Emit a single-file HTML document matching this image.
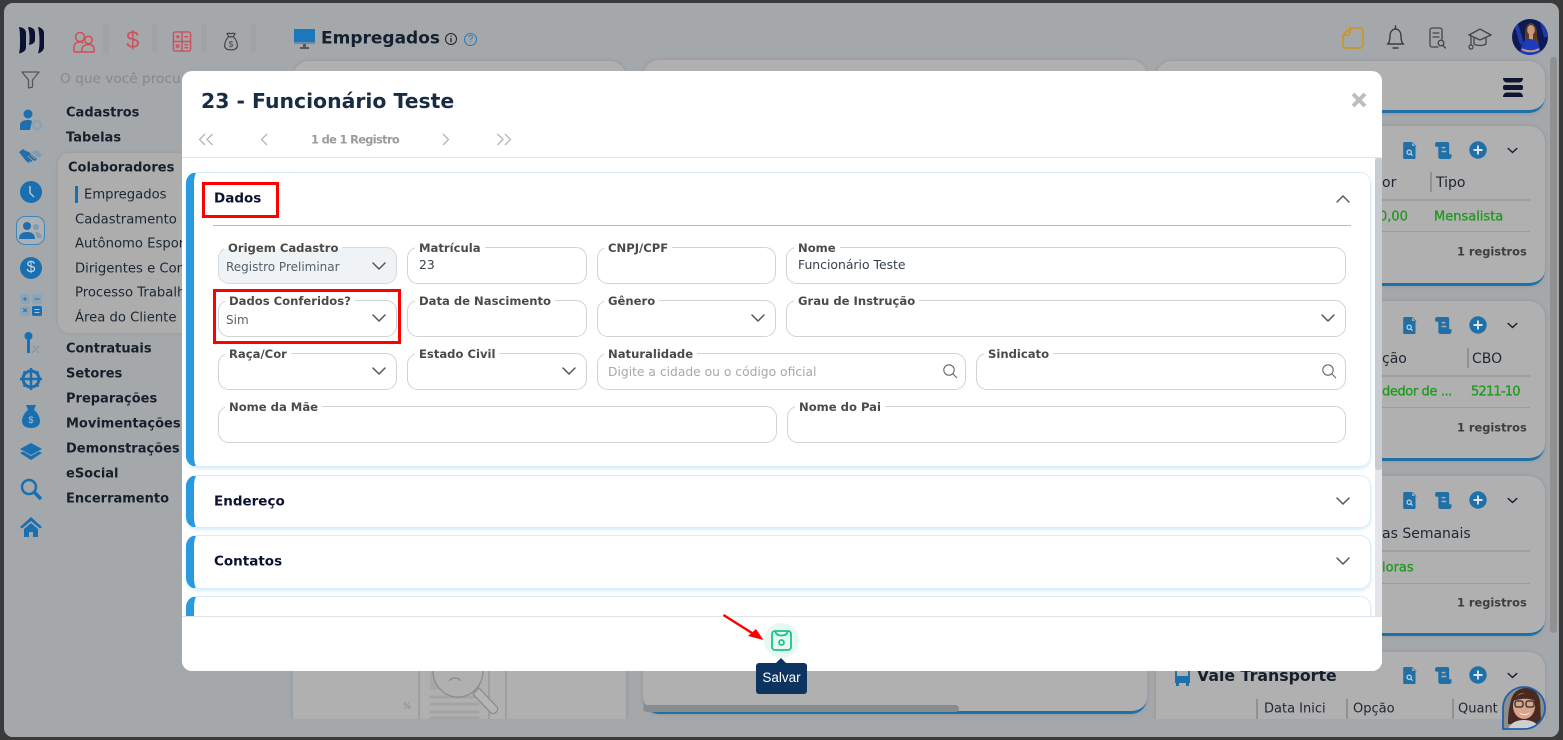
<!DOCTYPE html>
<html lang="pt-BR"><head><meta charset="utf-8"><title>Empregados</title>
<style>
html,body{margin:0;padding:0;width:1563px;height:740px;overflow:hidden;background:#3a3a3a}
*{box-sizing:border-box}
body{font-family:"DejaVu Sans","Liberation Sans",sans-serif;position:relative}
.a{position:absolute}
.t{position:absolute;white-space:nowrap;line-height:1;transform:translateY(-50%)}
#page{position:absolute;left:4px;top:3px;width:1555px;height:734px;background:#a5a8ab;border-radius:9px;overflow:hidden}
.card{position:absolute;background:#b0b0b0;border-radius:16px;box-shadow:0 0 5px rgba(0,0,0,.12)}
.blue{border-bottom:3px solid #2070a8}
.m{font-size:13px;font-weight:700;color:#161f2b}
.s{font-size:13.2px;color:#1d2733}
.h{font-size:14px;color:#1d2733}
.g{font-size:13px;font-weight:400;color:#1f9a1f;-webkit-text-stroke:.3px #1f9a1f}
.r{font-size:11.400px;font-weight:700;color:#3e3e3e}
.sep{position:absolute;background:#a0a3a6}
.ln{position:absolute;height:1px;background:#9c9c9c}
#modal{position:absolute;left:182px;top:71px;width:1200px;height:600px;background:#fff;border-radius:10px;overflow:hidden}
.acc{position:absolute;left:4px;width:1185px;background:#fff;border:1px solid #d9edf9;border-left:8px solid #2a9ade;border-radius:11px;box-shadow:0 2px 3px rgba(42,154,222,.18)}
.acct{position:absolute;left:32px;font-size:13.500px;font-weight:700;color:#0b1230;white-space:nowrap;line-height:1;transform:translateY(-50%)}
.f{position:absolute;height:37px;border:1px solid #ced4da;border-radius:11px;background:#fff}
.f b{position:absolute;left:6px;top:-7px;height:15px;padding:0 4px;background:#fff;font-size:11.6px;line-height:15px;font-weight:700;color:#4a4a4a;white-space:nowrap}
.f span{position:absolute;left:7px;top:19px;font-size:12px;line-height:1;color:#37424e;white-space:nowrap;transform:translateY(-50%)}
.f svg{position:absolute;right:9px;top:11px}
.red{position:absolute;border:3px solid #f00}
</style></head><body>
<svg width="0" height="0" style="position:absolute">
<symbol id="chev" viewBox="0 0 16 10"><path d="M2 2l6 6 6-6" fill="none" stroke="#555" stroke-width="1.5" stroke-linecap="round" stroke-linejoin="round"/></symbol>
<symbol id="mag" viewBox="0 0 16 16"><circle cx="7" cy="7" r="5.2" fill="none" stroke="#666" stroke-width="1.1"/><path d="M11 11l4 4" stroke="#666" stroke-width="1.1" fill="none"/></symbol>
<symbol id="doc" viewBox="0 0 16 20"><path d="M1.500 0H9l5.500 6v12.500a1.500 1.500 0 0 1-1.500 1.500H1.500A1.500 1.500 0 0 1 0 18.500V1.500A1.500 1.500 0 0 1 1.500 0z" fill="#2070a8"/><path d="M10 0l5 5h-5z" fill="#b0b0b0" stroke="#2070a8" stroke-width=".8"/><circle cx="7" cy="12" r="2.500" fill="none" stroke="#cfe0ec" stroke-width="1.300"/><path d="M9 14l2 2" stroke="#cfe0ec" stroke-width="1.300"/></symbol>
<symbol id="scr" viewBox="0 0 18 18"><path d="M0 2.500C0 1 1 0 2.500 0H13c1.300 0 2 1 2 2v11h2.500v2.500c0 1.400-1 2.500-2.500 2.500H6c-1.500 0-2.500-1-2.500-2.500V5H1.500C.5 5 0 4 0 2.500z" fill="#2070a8"/><path d="M7 6h4M7 10h5" stroke="#b0b0b0" stroke-width="1.600"/></symbol>
<symbol id="plus" viewBox="0 0 18 18"><circle cx="9" cy="9" r="8.700" fill="#2070a8"/><path d="M9 4.500v9M4.500 9h9" stroke="#dce6ee" stroke-width="1.900"/></symbol>
<symbol id="down" viewBox="0 0 14 8"><path d="M1.500 1.500L7 6.500l5.500-5" fill="none" stroke="#101a2c" stroke-width="1.800" stroke-linecap="round"/></symbol>
</svg>

<div id="page">
<!-- logo -->
<svg class="a" style="left:14px;top:23px" width="28" height="29" viewBox="0 0 28 29"><path d="M1 1C5 1.500 8 3 8 7v14c0 4-3 5.500-7 6.500 1-4 1-7 1-12.500S2 5 1 1z" fill="#0b1035"/><path d="M10 1c4 0 7 2 7 6v7c0 3-3 4.500-6 5 .5-3 .5-5 .5-8S11 5 10 1z" fill="#0b1035"/><path d="M20 1c3.500 .5 6 3 6 6v14c0 3-2.500 5.500-6 6.500 1-4 1.500-7 1.500-12.500S21 5 20 1z" fill="#0b1035"/></svg>
<div class="sep" style="left:99px;top:21px;width:6px;height:29px"></div>
<div class="sep" style="left:148px;top:21px;width:6px;height:29px"></div>
<div class="sep" style="left:197px;top:21px;width:6px;height:29px"></div>
<div class="sep" style="left:246px;top:21px;width:6px;height:29px"></div>
<!-- top icons -->
<svg class="a" style="left:69px;top:27px" width="22" height="24" viewBox="0 0 22 24" fill="none" stroke="#cf4f59" stroke-width="1.500"><circle cx="7" cy="7" r="4.500"/><circle cx="15.500" cy="10" r="3.800"/><path d="M1 22v-5c0-3 2-5 6-5 1.500 0 2.500.3 3.500 1M9 22v-3c0-2.500 2.500-4.500 6.500-4.500S21 16.500 21 19v3zM1 22h8"/></svg>
<div class="t" style="left:122px;top:38px;font-size:24px;color:#c95560;font-family:'Liberation Sans',sans-serif">$</div>
<svg class="a" style="left:168px;top:28px" width="20" height="21" viewBox="0 0 20 22" fill="none" stroke="#cf4f59" stroke-width="1.500"><rect x="1" y="1" width="18" height="20" rx="2"/><path d="M10 1v20M1 11h18M3.500 6h4M5.500 4v4M12.500 6h4M3.700 14l3.500 3.500M7.200 14l-3.500 3.500M12.500 14.500h4M12.500 17.500h4"/></svg>
<svg class="a" style="left:219px;top:29px" width="16" height="19" viewBox="0 0 18 24" fill="none" stroke="#444" stroke-width="1.500"><path d="M6 6L4 2c2-1 3 0 5 0s3-1 5 0l-2 4zM6 6C3 9 1 13 1 17c0 4 3 5.500 8 5.500s8-1.500 8-5.500c0-4-2-8-5-11z"/><text x="9" y="19" font-size="10" text-anchor="middle" fill="#444" stroke="none" font-family="Liberation Sans">$</text></svg>
<svg class="a" style="left:17px;top:68px" width="19" height="18" viewBox="0 0 19 18" fill="none" stroke="#555" stroke-width="1.300" stroke-linejoin="round"><path d="M1 1h17l-6.500 8v7l-4 1V9z"/></svg>
<div class="t" style="left:56px;top:77px;font-size:13.700px;color:#85888b">O que você procu</div>

<!-- sidebar icons -->
<svg class="a" style="left:15px;top:105px" width="25" height="24" viewBox="0 0 25 24"><circle cx="9" cy="6" r="4.500" fill="#1f6fae"/><path d="M1 22v-5c0-3 3-5 8-5 2 0 3 .3 4 1l-2 9z" fill="#1f6fae"/><circle cx="18" cy="17" r="4" fill="none" stroke="#88a3b8" stroke-width="2.800"/></svg>
<svg class="a" style="left:15px;top:145px" width="24" height="17" viewBox="0 0 24 17"><path d="M12 4l6-2 5 5-3 3z" fill="#7f9bb1"/><path d="M0 4l4-3 3 2 3 1 8 7-2 2-2-1-1 2-2-1-1 2-3-2z" fill="#1f6fae"/><path d="M9 8l5 5M11 6l5 5" stroke="#a5a8ab" stroke-width=".8"/></svg>
<div class="a" style="left:16px;top:178px;width:22px;height:22px;border-radius:50%;background:#1a6fb0"><svg width="22" height="22"><path d="M10 5v7l4 4" stroke="#b6c5d1" stroke-width="1.500" fill="none"/></svg></div>
<div class="a" style="left:12px;top:213px;width:29px;height:29px;border:1.500px solid #3a86bf;border-radius:9px;background:#adb0b3"></div>
<svg class="a" style="left:15px;top:217px" width="23" height="20" viewBox="0 0 23 20"><circle cx="8" cy="6" r="4" fill="#1f6fae"/><path d="M0 19c0-5 3-7 8-7s8 2 8 7z" fill="#1f6fae"/><circle cx="17" cy="7" r="3" fill="#7f9bb1"/><path d="M16 12c4 0 7 2 7 6h-5c0-2-1-4-2-6z" fill="#7f9bb1"/></svg>
<div class="a" style="left:16px;top:254px;width:22px;height:22px;border-radius:50%;background:#1a6fb0;color:#c8d5df;font:400 16px/22px 'Liberation Sans';text-align:center">$</div>
<svg class="a" style="left:16px;top:291px" width="22" height="22" viewBox="0 0 22 22"><rect width="10" height="10" rx="2" fill="#8ba4b8"/><rect x="12" width="10" height="10" rx="2" fill="#8ba4b8"/><rect y="12" width="10" height="10" rx="2" fill="#8ba4b8"/><rect x="12" y="12" width="10" height="10" rx="2" fill="#1a6fb0"/><path d="M3 5h4M5 3v4M14.500 5h5M3.200 14.500l3.600 3.600M6.800 14.500l-3.600 3.600M14.500 15.500h5M14.500 18.500h5" stroke="#2f6f9f" stroke-width="1"/><path d="M14.500 15.500h5M14.500 18.500h5" stroke="#b6c5d1" stroke-width="1"/></svg>
<svg class="a" style="left:19px;top:328px" width="18" height="24" viewBox="0 0 18 24"><circle cx="5.500" cy="5" r="4" fill="#1a6fb0"/><path d="M4 8h3v14H4z" fill="#1a6fb0"/><path d="M9 22l7-7M10 16h2M14 21h2" stroke="#7f9bb1" stroke-width="1.800"/></svg>
<svg class="a" style="left:16px;top:365px" width="22" height="22" viewBox="0 0 22 22" fill="none" stroke="#1a6fb0" stroke-width="3"><circle cx="11" cy="11" r="8"/><path d="M11 0v22M0 11h22M3.500 3.500l2 2M18.500 3.500l-2 2M3.500 18.500l2-2M18.500 18.500l-2-2" stroke-width="2.500"/></svg>
<svg class="a" style="left:18px;top:402px" width="18" height="23" viewBox="0 0 18 23"><path d="M4 0h10l-2 5c3 2 6 7 6 11 0 5-4 7-9 7s-9-2-9-7c0-4 3-9 6-11z" fill="#1a6fb0"/><text x="9" y="18" font-size="9" text-anchor="middle" fill="#b6c5d1" font-family="Liberation Sans">$</text></svg>
<svg class="a" style="left:16px;top:440px" width="22" height="18" viewBox="0 0 22 18"><path d="M11 0l11 6-11 6L0 6z" fill="#1a6fb0"/><path d="M0 10l3-1.500 8 4.500 8-4.500 3 1.500-11 7z" fill="#1a6fb0"/></svg>
<svg class="a" style="left:16px;top:475px" width="22" height="23" viewBox="0 0 22 23" fill="none" stroke="#1a6fb0"><circle cx="9" cy="9" r="7" stroke-width="2.500"/><path d="M14 14l7 7" stroke-width="3.500"/></svg>
<svg class="a" style="left:16px;top:514px" width="22" height="20" viewBox="0 0 22 20"><path d="M11 0L0 10l2 1.500L11 4l9 7.500 2-1.500z" fill="#1a6fb0"/><path d="M4 12l7-6 7 6v8h-5v-5H9v5H4z" fill="#1a6fb0"/></svg>

<div class="t m" style="left:62px;top:110px">Cadastros</div>
<div class="t m" style="left:62px;top:135px">Tabelas</div>
<div class="a" style="left:54px;top:150px;width:200px;height:180px;background:#adadad;border-radius:11px;box-shadow:0 0 4px rgba(0,0,0,.1)"></div>
<div class="t m" style="left:64px;top:165px">Colaboradores</div>
<div class="a" style="left:71px;top:183px;width:3px;height:17px;background:#1a6fb0"></div>
<div class="t s" style="left:80px;top:192px">Empregados</div>
<div class="t s" style="left:71px;top:217px">Cadastramento</div>
<div class="t s" style="left:71px;top:241px">Autônomo Espor</div>
<div class="t s" style="left:71px;top:266px">Dirigentes e Con</div>
<div class="t s" style="left:71px;top:290px">Processo Trabalh</div>
<div class="t s" style="left:71px;top:315px">Área do Cliente</div>
<div class="t m" style="left:62px;top:346px">Contratuais</div>
<div class="t m" style="left:62px;top:371px">Setores</div>
<div class="t m" style="left:62px;top:396px">Preparações</div>
<div class="t m" style="left:62px;top:421px">Movimentações</div>
<div class="t m" style="left:62px;top:446px">Demonstrações</div>
<div class="t m" style="left:62px;top:471px">eSocial</div>
<div class="t m" style="left:62px;top:496px">Encerramento</div>

<!-- title -->
<svg class="a" style="left:290px;top:26px" width="21" height="21" viewBox="0 0 21 21"><rect width="21" height="13" fill="#1a78bd"/><rect y="13" width="21" height="2" fill="#6d8ba2"/><path d="M9 15h3v3h3v2H6v-2h3z" fill="#4e5a63"/></svg>
<div class="t" style="left:317px;top:36px;font-size:17px;font-weight:700;color:#15202e">Empregados</div>
<svg class="a" style="left:440px;top:29px" width="14" height="14" viewBox="0 0 14 14" fill="none" stroke="#222" stroke-width="1"><circle cx="7" cy="7" r="5.500"/><path d="M7 6v4.200M7 3.600v1.200" stroke-width="1.300"/></svg>
<div class="a" style="left:460px;top:30px;width:13px;height:13px;border:1px solid #2a7ab8;border-radius:50%;color:#2a7ab8;font:10px/11px 'Liberation Sans';text-align:center">?</div>

<!-- top right icons -->
<svg class="a" style="left:1338px;top:23px" width="22" height="23" viewBox="0 0 22 23" fill="none" stroke="#c9962a" stroke-width="1.700" stroke-linejoin="round"><path d="M8 2h10a3 3 0 0 1 3 3v14a3 3 0 0 1-3 3H4a3 3 0 0 1-3-3V9z"/><path d="M1 9h5a2 2 0 0 0 2-2V2"/></svg>
<svg class="a" style="left:1382px;top:22px" width="19" height="25" viewBox="0 0 19 25" fill="none" stroke="#3c3c3c" stroke-width="1.400" stroke-linecap="round"><path d="M9.500 1v3M2 19c1.500-2 2-4 2-8 0-4 2.500-7 5.500-7s5.500 3 5.500 7c0 4 .5 6 2 8zM1.500 19h16M7 23h5"/></svg>
<svg class="a" style="left:1425px;top:24px" width="18" height="22" viewBox="0 0 18 22" fill="none" stroke="#444" stroke-width="1.300" stroke-linecap="round"><path d="M13 12V3a2 2 0 0 0-2-2H3a2 2 0 0 0-2 2v15a2 2 0 0 0 2 2h6M4 6h6M4 10h6"/><circle cx="12" cy="16" r="2.800"/><path d="M14 18.500l2.500 2.500"/></svg>
<svg class="a" style="left:1464px;top:24px" width="24" height="24" viewBox="0 0 24 24" fill="none" stroke="#444" stroke-width="1.300"><path d="M1 8l11-6 11 6-11 5z"/><path d="M6 11v6c3 2 9 2 12 0v-6M3 9v9"/><circle cx="3" cy="20" r="2"/></svg>
<svg class="a" style="left:1508px;top:16px" width="36" height="36" viewBox="0 0 36 36"><defs><clipPath id="c1"><circle cx="18" cy="18" r="18"/></clipPath></defs><g clip-path="url(#c1)"><rect width="36" height="36" fill="#0c1a55"/><path d="M4 5l6 20M30 3l4 15" stroke="#2438a8" stroke-width="4"/><path d="M13 14c0-7 3-10 6-10s6 4 6 10 1 8 2 11H12c1-3 1-7 1-11z" fill="#5b3b24"/><ellipse cx="19" cy="11" rx="3.800" ry="5" fill="#c99a7b"/><rect x="17" y="15" width="4" height="6" fill="#c99a7b"/><path d="M8 36c0-9 4-16 10-16s11 7 11 16z" fill="#1c3bbd"/><path d="M10 30c4 3 12 3 17 0" stroke="#c99a7b" stroke-width="2" fill="none"/></g></svg>

<!-- background cards -->
<div class="card" style="left:289px;top:58px;width:333px;height:700px"></div>
<div class="card" style="left:639px;top:57px;width:504px;height:654px;border-bottom:3px solid #2070a8"></div>
<div class="a" style="left:639px;top:702px;width:316px;height:7px;background:#8a8b8d;border-radius:4px"></div>
<div class="card blue" style="left:1152px;top:58px;width:389px;height:52px"></div>
<div class="card blue" style="left:1152px;top:123px;width:389px;height:160px"></div>
<div class="card blue" style="left:1152px;top:298px;width:389px;height:160px"></div>
<div class="card blue" style="left:1152px;top:473px;width:389px;height:160px"></div>
<div class="card" style="left:1152px;top:649px;width:389px;height:100px"></div>

<!-- illustration left card bottom -->
<svg class="a" style="left:389px;top:668px" width="130" height="48" viewBox="0 0 130 48" fill="none"><path d="M26 0v48M96 0v48M113 0v48" stroke="#8f8f8f" stroke-width="1.200" opacity=".85"/><rect x="37" y="0" width="50" height="19" fill="#a8a8a8"/><path d="M38 26h47M38 33h47M38 41h47M38 47h47" stroke="#a3a3a3" stroke-width="3" stroke-linecap="round"/><path d="M40 0c0 14 11 26 25 26S90 14 90 0" stroke="#8a8a8a" stroke-width="1.200" fill="#b0b0b0"/><path d="M56 10c3-4 9-4 12 0" stroke="#8a8a8a" stroke-width="1.200"/><path d="M80 23l6-6 18 19c2.500 3.500-2.500 8-6 6z" stroke="#8a8a8a" stroke-width="1.200" fill="#b5b5b5"/></svg>
<div class="t" style="left:399px;top:704px;font-size:8.500px;color:#7f9080">%</div>

<div class="a" style="left:0;top:716px;width:1555px;height:20px;background:#a5a8ab"></div>
<div class="a" style="left:1546px;top:54px;width:7px;height:576px;background:#8f9193;border-radius:4px"></div>

<svg class="a" style="left:1499px;top:74px" width="21" height="21" viewBox="0 0 21 21"><path d="M0 1h20c0 3-2 4.500-4 4.500H4C2 5.500 0 4 0 1z" fill="#0f1634"/><rect y="8" width="20" height="5" rx="2" fill="#0f1634"/><path d="M0 20c0-3 2-4.500 4-4.500h12c2 0 4 1.500 4 4.500z" fill="#0f1634"/></svg>

<!-- card 2 -->
<svg class="a" style="left:1399px;top:139px" width="14" height="17"><use href="#doc"/></svg>
<svg class="a" style="left:1431px;top:139px" width="17" height="17"><use href="#scr"/></svg>
<svg class="a" style="left:1465px;top:138px" width="18" height="18"><use href="#plus"/></svg>
<svg class="a" style="left:1503px;top:144px" width="11" height="7"><use href="#down"/></svg>
<div class="t h" style="left:1378px;top:180px">or</div><div class="a" style="left:1426px;top:169px;width:2px;height:20px;background:#909396"></div><div class="t h" style="left:1432px;top:180px">Tipo</div>
<div class="ln" style="left:1378px;top:196px;width:148px;background:#9f9f9f;height:2px"></div>
<div class="t g" style="left:1375px;top:214px">0,00</div><div class="t g" style="left:1430px;top:214px">Mensalista</div>
<div class="ln" style="left:1378px;top:228px;width:148px"></div>
<div class="t r" style="left:1453px;top:249px">1 registros</div>
<!-- card 3 -->
<svg class="a" style="left:1399px;top:314px" width="14" height="17"><use href="#doc"/></svg>
<svg class="a" style="left:1431px;top:314px" width="17" height="17"><use href="#scr"/></svg>
<svg class="a" style="left:1465px;top:313px" width="18" height="18"><use href="#plus"/></svg>
<svg class="a" style="left:1503px;top:319px" width="11" height="7"><use href="#down"/></svg>
<div class="t h" style="left:1378px;top:356px">ção</div><div class="a" style="left:1463px;top:345px;width:2px;height:20px;background:#909396"></div><div class="t h" style="left:1468px;top:356px">CBO</div>
<div class="ln" style="left:1378px;top:372px;width:148px;background:#9f9f9f;height:2px"></div>
<div class="t g" style="left:1378px;top:389px;letter-spacing:-.4px">dedor de ...</div><div class="t g" style="left:1467px;top:389px;letter-spacing:-.8px">5211-10</div>
<div class="ln" style="left:1378px;top:404px;width:148px"></div>
<div class="t r" style="left:1453px;top:425px">1 registros</div>
<!-- card 4 -->
<svg class="a" style="left:1399px;top:489px" width="14" height="17"><use href="#doc"/></svg>
<svg class="a" style="left:1431px;top:489px" width="17" height="17"><use href="#scr"/></svg>
<svg class="a" style="left:1465px;top:488px" width="18" height="18"><use href="#plus"/></svg>
<svg class="a" style="left:1503px;top:494px" width="11" height="7"><use href="#down"/></svg>
<div class="t h" style="left:1378px;top:531px">as Semanais</div>
<div class="ln" style="left:1378px;top:547px;width:148px;background:#9f9f9f;height:2px"></div>
<div class="t g" style="left:1378px;top:565px">loras</div>
<div class="ln" style="left:1378px;top:580px;width:148px"></div>
<div class="t r" style="left:1453px;top:600px">1 registros</div>
<!-- card 5 -->
<svg class="a" style="left:1169px;top:664px" width="19" height="19" viewBox="0 0 19 19"><path d="M2 3c0-2 3-3 7.500-3S17 1 17 3v13H2z" fill="#2070a8"/><rect x="4" y="4" width="11" height="5" fill="#b0b0b0"/><rect x="3" y="15" width="3" height="4" fill="#2070a8"/><rect x="13" y="15" width="3" height="4" fill="#2070a8"/></svg>
<div class="t" style="left:1193px;top:673px;font-size:16px;font-weight:700;color:#161f2b;transform:translateY(-50%) scaleX(.985);transform-origin:left">Vale Transporte</div>
<svg class="a" style="left:1399px;top:664px" width="14" height="17"><use href="#doc"/></svg>
<svg class="a" style="left:1431px;top:664px" width="17" height="17"><use href="#scr"/></svg>
<svg class="a" style="left:1465px;top:663px" width="18" height="18"><use href="#plus"/></svg>
<svg class="a" style="left:1503px;top:669px" width="11" height="7"><use href="#down"/></svg>
<div class="t h" style="left:1260px;top:706px;font-size:13px">Data Inici</div>
<div class="t h" style="left:1349px;top:706px;font-size:13px">Opção</div>
<div class="t h" style="left:1454px;top:706px;font-size:13px">Quant</div>
<div class="a" style="left:1252px;top:696px;width:2px;height:20px;background:#909396"></div>
<div class="a" style="left:1342px;top:696px;width:2px;height:20px;background:#909396"></div>
<div class="a" style="left:1448px;top:696px;width:2px;height:20px;background:#909396"></div>

<!-- assistant avatar -->
<svg class="a" style="left:1498px;top:683px" width="44" height="44" viewBox="0 0 44 44"><defs><clipPath id="c2"><path d="M1 43V22a21 21 0 1 1 21 21z"/></clipPath></defs><g clip-path="url(#c2)"><rect width="44" height="44" fill="#8f8d8a"/><path d="M6 38c0-10 1-16 3-24C11 6 17 2 24 2s13 5 14 13c1 9 0 16 2 24z" fill="#4a2a20"/><ellipse cx="22" cy="20" rx="11" ry="13" fill="#d9a68d"/><path d="M11 15c3-6 9-8 14-8s8 3 8 8c-5-3-14-3-22 0z" fill="#4a2a20"/><rect x="13" y="15" width="8" height="6" rx="2" fill="none" stroke="#2b2b2b" stroke-width="1.300"/><rect x="24" y="15" width="8" height="6" rx="2" fill="none" stroke="#2b2b2b" stroke-width="1.300"/><path d="M17 26c3 3 8 3 11 0-2 4-9 4-11 0z" fill="#fff"/><path d="M6 44c2-7 8-10 16-10s14 3 16 10z" fill="#cfcfd2"/></g><path d="M1 43V22a21 21 0 1 1 21 21z" fill="none" stroke="#1f5fae" stroke-width="1.800"/></svg>
</div>

<!-- MODAL -->
<div id="modal">
<div class="t" style="left:19px;top:30px;font-size:20.400px;font-weight:700;color:#182d42">23 - Funcionário Teste</div>
<svg class="a" style="left:1168px;top:20px" width="18" height="18" viewBox="0 0 18 18"><path d="M3 3l12 12M15 3L3 15" stroke="#bdbdbd" stroke-width="4"/></svg>
<svg class="a" style="left:16px;top:62px" width="16" height="13" viewBox="0 0 16 13" fill="none" stroke="#b5b5b5" stroke-width="1.300"><path d="M7 1L1.500 6.500 7 12M14.500 1L9 6.500l5.500 5.500"/></svg>
<svg class="a" style="left:78px;top:62px" width="9" height="13" viewBox="0 0 9 13" fill="none" stroke="#b5b5b5" stroke-width="1.300"><path d="M7 1L1.500 6.500 7 12"/></svg>
<div class="t" style="left:129px;top:69px;font-size:11.400px;font-weight:700;color:#9b9b9b;letter-spacing:-.65px">1 de 1 Registro</div>
<svg class="a" style="left:259px;top:62px" width="9" height="13" viewBox="0 0 9 13" fill="none" stroke="#b5b5b5" stroke-width="1.300"><path d="M2 1l5.500 5.500L2 12"/></svg>
<svg class="a" style="left:314px;top:62px" width="16" height="13" viewBox="0 0 16 13" fill="none" stroke="#b5b5b5" stroke-width="1.300"><path d="M1.500 1L7 6.500 1.500 12M9 1l5.500 5.500L9 12"/></svg>
<div class="a" style="left:0;top:86px;width:1200px;height:1px;background:#e2e4e7"></div>

<!-- accordions -->
<div class="acc" style="top:101px;height:295px"></div>
<div class="acct" style="top:128px">Dados</div>
<svg class="a" style="left:1153px;top:123px" width="16" height="10"><path d="M2 8l6-6 6 6" fill="none" stroke="#555" stroke-width="1.400" stroke-linecap="round"/></svg>
<div class="a" style="left:31px;top:154px;width:1138px;height:1px;background:#a6bccb"></div>

<div class="f" style="left:36px;top:176px;width:179px;background:#f0f3f5;border-color:#d5dade"><b style="background:linear-gradient(#fff 50%,#f0f3f5 50%);left:5px">Origem Cadastro</b><span style="color:#55606b">Registro Preliminar</span><svg width="16" height="10" style="top:13px"><use href="#chev"/></svg></div>
<div class="f" style="left:225px;top:176px;width:180px"><b style="left:7px">Matrícula</b><span style="top:17px;left:11px;font-size:12.400px">23</span></div>
<div class="f" style="left:415px;top:176px;width:179px"><b>CNPJ/CPF</b></div>
<div class="f" style="left:604px;top:176px;width:560px"><b style="left:7px">Nome</b><span style="top:17px;left:11px;font-size:12.400px">Funcionário Teste</span></div>

<div class="f" style="left:36px;top:229px;width:179px"><b>Dados Conferidos?</b><span style="color:#55606b">Sim</span><svg width="16" height="10" style="top:12px"><use href="#chev"/></svg></div>
<div class="f" style="left:225px;top:229px;width:180px"><b style="left:7px">Data de Nascimento</b></div>
<div class="f" style="left:415px;top:229px;width:179px"><b>Gênero</b><svg width="16" height="10" style="top:12px"><use href="#chev"/></svg></div>
<div class="f" style="left:604px;top:229px;width:560px"><b style="left:7px">Grau de Instrução</b><svg width="16" height="10" style="top:12px"><use href="#chev"/></svg></div>

<div class="f" style="left:36px;top:282px;width:179px"><b>Raça/Cor</b><svg width="16" height="10" style="top:12px"><use href="#chev"/></svg></div>
<div class="f" style="left:225px;top:282px;width:180px"><b style="left:7px">Estado Civil</b><svg width="16" height="10" style="top:12px"><use href="#chev"/></svg></div>
<div class="f" style="left:415px;top:282px;width:369px"><b>Naturalidade</b><span style="color:#a8a8a8;left:10px;font-size:12.300px;top:18px">Digite a cidade ou o código oficial</span><svg width="16" height="16" style="top:9px;right:7px"><use href="#mag"/></svg></div>
<div class="f" style="left:794px;top:282px;width:370px"><b style="left:7px">Sindicato</b><svg width="16" height="16" style="top:9px;right:8px"><use href="#mag"/></svg></div>

<div class="f" style="left:36px;top:335px;width:559px"><b>Nome da Mãe</b></div>
<div class="f" style="left:605px;top:335px;width:559px"><b style="left:7px">Nome do Pai</b></div>

<div class="acc" style="top:404px;height:53px"></div>
<div class="acct" style="top:431px">Endereço</div>
<svg class="a" style="left:1153px;top:425px" width="16" height="10"><use href="#chev"/></svg>
<div class="acc" style="top:464px;height:54px"></div>
<div class="acct" style="top:491px">Contatos</div>
<svg class="a" style="left:1153px;top:485px" width="16" height="10"><use href="#chev"/></svg>
<div class="acc" style="top:525px;height:60px"></div>

<div class="a" style="left:1193px;top:87px;width:7px;height:458px;background:#e3e5e8"></div>
<div class="a" style="left:1193px;top:87px;width:7px;height:312px;background:#c8cbcf;border-radius:3px"></div>

<!-- footer -->
<div class="a" style="left:0;top:545px;width:1200px;height:55px;background:#fff;border-top:1px solid #e2e4e7"></div>
<div class="a" style="left:582px;top:552px;width:35px;height:35px;border-radius:50%;background:#e7f7f2"></div>
<svg class="a" style="left:589px;top:559px" width="21" height="21" viewBox="0 0 21 21" fill="none" stroke="#1cc28f" stroke-width="1.800" stroke-linejoin="round"><path d="M4 1h13a3 3 0 0 1 3 3v13a3 3 0 0 1-3 3H4a3 3 0 0 1-3-3V4a3 3 0 0 1 3-3z"/><path d="M4.500 1c0 3 2 4.500 6 4.500s6-1.500 6-4.500"/><circle cx="10.500" cy="12.500" r="2.500"/></svg>

<div class="red" style="left:20px;top:111px;width:77px;height:36px"></div>
<div class="red" style="left:31px;top:218px;width:188px;height:55px"></div>
</div>

<!-- tooltip and arrow over modal edge -->
<div class="a" style="left:756px;top:663px;width:51px;height:31px;background:#0d3461;border-radius:3px;color:#fff;font:13.500px/29px 'Liberation Sans',sans-serif;text-align:center">Salvar</div>
<div class="a" style="left:776px;top:658px;width:0;height:0;border-left:5px solid transparent;border-right:5px solid transparent;border-bottom:5px solid #0d3461"></div>
<svg class="a" style="left:720px;top:611px" width="50" height="34" viewBox="0 0 50 34"><path d="M3.500 4L32 22" stroke="#f00" stroke-width="2.400"/><path d="M43.500 29L28 25l8-7z" fill="#f00"/></svg>
</body></html>
